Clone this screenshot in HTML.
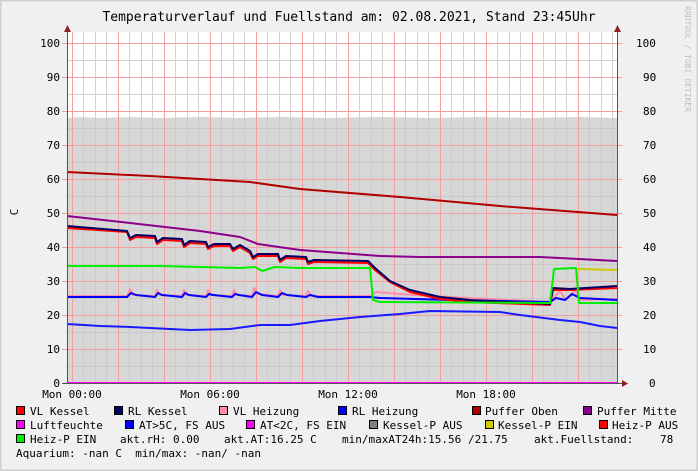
<!DOCTYPE html>
<html><head><meta charset="utf-8"><style>
html,body{margin:0;padding:0;background:#f0f0f0}
svg{display:block}
text{font-family:"DejaVu Sans Mono","Liberation Mono",monospace;font-size:11px;fill:#000}
</style></head><body>
<svg width="698" height="471" viewBox="0 0 698 471" xmlns="http://www.w3.org/2000/svg">
<rect x="0" y="0" width="698" height="471" fill="#f0f0f0"/>
<rect x="0.5" y="0.5" width="697" height="470" fill="none" stroke="#cfcfcf" stroke-width="2"/>
<text x="349" y="21" text-anchor="middle" style="font-size:13px">Temperaturverlauf und Fuellstand am: 02.08.2021, Stand 23:45Uhr</text>
<text transform="translate(685,6) rotate(90)" style="font-size:8px;fill:#c0c0c0">RRDTOOL / TOBI OETIKER</text>
<rect x="67" y="32" width="550" height="351" fill="#fff"/>
<path d="M67 118 L80 117 L100 118 L130 117 L160 118 L200 117 L240 118 L280 117 L330 118 L380 117 L430 118 L480 117 L530 118 L580 117 L617 118 L617 383 L67 383Z" fill="#d7d7d7"/>
<g id="grid" stroke-width="1">
<g stroke="#c8c8c8" opacity="0.8">
<path d="M83.5 32V383M95.5 32V383M106.5 32V383M129.5 32V383M141.5 32V383M152.5 32V383M175.5 32V383M187.5 32V383M198.5 32V383M221.5 32V383M233.5 32V383M244.5 32V383M267.5 32V383M279.5 32V383M290.5 32V383M313.5 32V383M325.5 32V383M336.5 32V383M359.5 32V383M371.5 32V383M382.5 32V383M405.5 32V383M417.5 32V383M428.5 32V383M451.5 32V383M463.5 32V383M474.5 32V383M497.5 32V383M509.5 32V383M520.5 32V383M543.5 32V383M555.5 32V383M566.5 32V383M589.5 32V383M601.5 32V383M612.5 32V383"/>
<path d="M67 366.5H617M67 332.5H617M67 298.5H617M67 264.5H617M67 230.5H617M67 196.5H617M67 162.5H617M67 128.5H617M67 94.5H617M67 60.5H617"/>
</g>
<g stroke="#f0a0a0">
<path d="M72.5 32V383M118.5 32V383M164.5 32V383M210.5 32V383M256.5 32V383M302.5 32V383M348.5 32V383M394.5 32V383M440.5 32V383M486.5 32V383M532.5 32V383M578.5 32V383"/>
<path d="M62 349.5H622M62 315.5H622M62 281.5H622M62 247.5H622M62 213.5H622M62 179.5H622M62 145.5H622M62 111.5H622M62 77.5H622M62 43.5H622"/>
</g>
</g>
<g fill="none" stroke-width="2" stroke-linejoin="round">
<polyline stroke="#b00000" points="67,172 150,176 250,182 300,189 400,197 500,206 617,215"/>
<polyline stroke="#8b008b" points="67,216 130,223 200,231 240,237 258,244 300,250 380,256 420,257 540,257 617,261"/>
<polyline stroke="#1a1aff" points="67,324 100,326 130,327 150,328 190,330 230,329 260,325 290,325 320,321 360,317 400,314 430,311 500,312 520,315 560,320 580,322 600,326 617,328"/>
<polyline stroke="#ff8fa8" points="67,296 127,296 130,289 133,295 155,296 157,290 160,295 182,296 184,290 187,295 206,296 208,290 211,295 232,296 234,290 237,295 252,296 254,288 258,294 278,296 280,290 283,295 306,296 308,291 312,296 370,296 376,292 400,294 450,297 550,302 560,291 566,300 575,290 580,300 617,299"/>
<polyline stroke="#0000ff" points="67,297 127,297 131,293 136,295 155,297 158,293 162,295 182,297 185,293 189,295 206,297 209,294 213,295 232,297 235,294 239,295 252,297 256,292 262,295 278,297 282,293 287,295 306,297 310,295 318,297 370,297 380,298 450,300 550,302 556,298 565,300 572,294 580,298 617,300"/>
<polyline stroke="#ff0000" points="67,228 127,232 130,240 136,237 155,238 157,244 163,240 182,241 184,247 190,243 206,244 208,249 214,246 230,246 233,251 240,247 250,253 253,259 258,256 278,256 280,262 286,258 306,259 308,264 314,262 368,263 375,270 390,282 410,292 440,299 470,302 550,305 553,290 570,290 617,288"/>
<polyline stroke="#000066" points="67,226 127,231 130,238 136,235 155,236 157,242 163,238 182,239 184,245 190,241 206,242 208,247 214,244 230,244 233,249 240,245 250,251 253,257 258,254 278,254 280,260 286,256 306,257 308,262 314,260 368,261 375,268 390,281 410,290 440,297 470,300 550,304 553,288 570,289 617,286"/>
<polyline stroke="#cccc00" points="578,269 617,270"/>
<polyline stroke="#00ee00" points="67,266 160,266 240,268 255,267 262,271 275,267 300,268 370,268 373,300 380,302 550,303 554,269 576,268 579,303 617,303"/>
<line x1="67" y1="383" x2="617" y2="383" stroke="#ff00ff"/>
</g>
<path d="M67.5 30V384M617.5 30V384M62 383.5H622" stroke="#555" stroke-width="1"/>
<path d="M64 32L67.5 25L71 32Z M614 32L617.5 25L621 32Z M622 380L628 383.5L622 387Z" fill="#902020"/>
<g text-anchor="end">
<text x="60" y="47">100</text><text x="60" y="81">90</text><text x="60" y="115">80</text><text x="60" y="149">70</text><text x="60" y="183">60</text><text x="60" y="217">50</text><text x="60" y="251">40</text><text x="60" y="285">30</text><text x="60" y="319">20</text><text x="60" y="353">10</text><text x="60" y="387">0</text>
</g>
<g>
<text x="636" y="47">100</text><text x="643" y="81">90</text><text x="643" y="115">80</text><text x="643" y="149">70</text><text x="643" y="183">60</text><text x="643" y="217">50</text><text x="643" y="251">40</text><text x="643" y="285">30</text><text x="643" y="319">20</text><text x="643" y="353">10</text><text x="649" y="387">0</text>
</g>
<text transform="translate(18,212) rotate(-90)" text-anchor="middle">C</text>
<g text-anchor="middle"><text x="72" y="398">Mon 00:00</text><text x="210" y="398">Mon 06:00</text><text x="348" y="398">Mon 12:00</text><text x="486" y="398">Mon 18:00</text></g>
<g stroke="#000" stroke-width="1">
<rect x="16.5" y="406.5" width="8" height="8" fill="#ff0000"/>
<rect x="114.5" y="406.5" width="8" height="8" fill="#000066"/>
<rect x="219.5" y="406.5" width="8" height="8" fill="#ff8fa8"/>
<rect x="338.5" y="406.5" width="8" height="8" fill="#0000ff"/>
<rect x="472.5" y="406.5" width="8" height="8" fill="#b00000"/>
<rect x="583.5" y="406.5" width="8" height="8" fill="#8b008b"/>
<rect x="16.5" y="420.5" width="8" height="8" fill="#ff00ff"/>
<rect x="125.5" y="420.5" width="8" height="8" fill="#0000ff"/>
<rect x="246.5" y="420.5" width="8" height="8" fill="#ff00ff"/>
<rect x="369.5" y="420.5" width="8" height="8" fill="#808080"/>
<rect x="485.5" y="420.5" width="8" height="8" fill="#cccc00"/>
<rect x="599.5" y="420.5" width="8" height="8" fill="#ff0000"/>
<rect x="16.5" y="434.5" width="8" height="8" fill="#00ee00"/>
</g>
<g>
<text x="30" y="415">VL Kessel</text><text x="128" y="415">RL Kessel</text><text x="233" y="415">VL Heizung</text><text x="352" y="415">RL Heizung</text><text x="485" y="415">Puffer Oben</text><text x="597" y="415">Puffer Mitte</text>
<text x="30" y="429">Luftfeuchte</text><text x="139" y="429">AT&gt;5C, FS AUS</text><text x="260" y="429">AT&lt;2C, FS EIN</text><text x="383" y="429">Kessel-P AUS</text><text x="498" y="429">Kessel-P EIN</text><text x="612" y="429">Heiz-P AUS</text>
<text x="30" y="443">Heiz-P EIN</text><text x="120" y="443">akt.rH: 0.00</text><text x="224" y="443">akt.AT:16.25 C</text><text x="342" y="443">min/maxAT24h:15.56</text><text x="468" y="443">/21.75</text><text x="534" y="443">akt.Fuellstand:</text><text x="660" y="443">78</text>
<text x="16" y="457" xml:space="preserve">Aquarium: -nan C  min/max: -nan/ -nan</text>
</g>
</svg>
</body></html>
